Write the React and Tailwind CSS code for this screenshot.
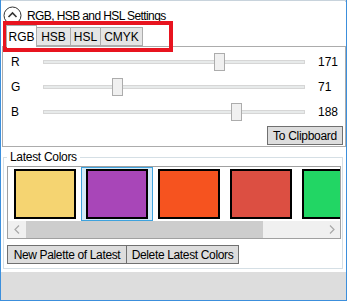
import React from "react";

const swatches = ["#f5d471", "#a846b8", "#f6531f", "#dc4f42", "#22d664"];

function Slider({ label, value, pos }) {
  return (
    <div className="h-[25px] flex items-center">
      <div className="w-[40px] pl-[8px]">{label}</div>
      <div className="relative w-[262px] h-[4px] bg-[#e7eaea] border border-[#d6d6d6]">
        <div
          className="absolute top-[-8px] w-[11px] h-[18px] bg-[#f0f0f0] border border-[#acacac]"
          style={{ left: pos }}
        />
      </div>
      <div className="ml-[13px]">{value}</div>
    </div>
  );
}

export default function App() {
  return (
    <div className="w-[348px] h-[302px] bg-white text-black text-[12px] leading-none font-['Liberation_Sans',sans-serif]">
      <div className="relative w-[347px] h-[301px] border-x border-b border-[#3c8fdc] flex flex-col">
        {/* top line */}
        <div className="w-[345px] h-[2px] border-t border-r border-[#c8d3dc]" />
        {/* header */}
        <div className="h-[23px] flex items-center pt-[4px]">
          <svg width="19" height="19" viewBox="0 0 19 19" className="ml-[2px]">
            <circle cx="9.5" cy="9.5" r="8.5" fill="none" stroke="#333" strokeWidth="1" />
            <path d="M5.5 11 L9.5 7 L13.5 11" fill="none" stroke="#333" strokeWidth="1.6" />
          </svg>
          <span className="ml-[5px] tracking-[-0.6px]">RGB, HSB and HSL Settings</span>
        </div>
        {/* tabs */}
        <div className="h-[21px] flex items-start pl-[5px] relative z-10">
          <div className="w-[31px] h-[22px] bg-white border border-b-0 border-[#acacac] flex items-center justify-center">
            RGB
          </div>
          <div className="-ml-[1px] mt-[2px] w-[35px] h-[19px] bg-[#e5e5e5] border border-[#acacac] flex items-center justify-center">
            HSB
          </div>
          <div className="-ml-[1px] mt-[2px] w-[31px] h-[19px] bg-[#e5e5e5] border border-[#acacac] flex items-center justify-center">
            HSL
          </div>
          <div className="-ml-[1px] mt-[2px] w-[43px] h-[19px] bg-[#e5e5e5] border border-[#acacac] flex items-center justify-center">
            CMYK
          </div>
        </div>
        {/* panel */}
        <div className="ml-[1px] w-[344px] h-[101px] border border-[#acacac] pt-[2px] flex flex-col">
          <Slider label="R" value="171" pos="170px" />
          <Slider label="G" value="71" pos="68px" />
          <Slider label="B" value="188" pos="187px" />
          <div className="flex justify-end mt-[2px] pr-[2px]">
            <div className="w-[76px] h-[19px] bg-[#dddddd] border border-[#707070] flex items-center justify-center tracking-[-0.3px]">
              To Clipboard
            </div>
          </div>
        </div>
        {/* group box */}
        <div className="relative ml-[2px] mt-[10px] w-[340px] h-[112px] border border-[#d5dfe5] flex flex-col">
          <div className="absolute top-[-7px] left-[3px] px-[3px] bg-white tracking-[-0.3px]">Latest Colors</div>
          <div className="ml-[3px] mt-[8px] w-[334px] h-[73px] border border-[#a0a0a0] flex flex-col overflow-hidden">
            <div className="h-[54px] flex pl-[1px] overflow-hidden">
              {swatches.map((c, i) => (
                <div
                  key={i}
                  className={
                    i === 1
                      ? "shrink-0 w-[72px] h-[54px] bg-[#d5ebf8] border border-[#3ea2dd] flex items-center justify-center"
                      : "shrink-0 w-[72px] h-[54px] border border-transparent flex items-center justify-center"
                  }
                >
                  <div className="w-[62px] h-[50px] border-2 border-black" style={{ background: c }} />
                </div>
              ))}
            </div>
            <div className="h-[17px] bg-[#f0f0f0] flex items-center">
              <div className="w-[18px] h-[17px] flex items-center justify-center">
                <svg width="6" height="9" viewBox="0 0 6 9">
                  <path d="M5 0.5 L1 4.5 L5 8.5" fill="none" stroke="#a8a8a8" strokeWidth="1.2" />
                </svg>
              </div>
              <div className="w-[237px] h-[17px] bg-[#cdcdcd]" />
              <div className="flex-1 flex justify-end pr-[5px]">
                <svg width="6" height="9" viewBox="0 0 6 9">
                  <path d="M1 0.5 L5 4.5 L1 8.5" fill="none" stroke="#a8a8a8" strokeWidth="1.2" />
                </svg>
              </div>
            </div>
          </div>
          <div className="ml-[3px] mt-[6px] flex tracking-[-0.35px]">
            <div className="w-[120px] h-[19px] bg-[#dddddd] border border-[#707070] flex items-center justify-center">
              New Palette of Latest
            </div>
            <div className="-ml-[1px] w-[113px] h-[19px] bg-[#dddddd] border border-[#707070] flex items-center justify-center">
              Delete Latest Colors
            </div>
          </div>
        </div>
        <div className="mt-[3px] flex-1 bg-[#dddddd]" />
        {/* annotation red box */}
        <div className="absolute left-[2px] top-[21px] w-[170px] h-[31px] border-[4px] border-[#e8141f] pointer-events-none" />
      </div>
    </div>
  );
}
